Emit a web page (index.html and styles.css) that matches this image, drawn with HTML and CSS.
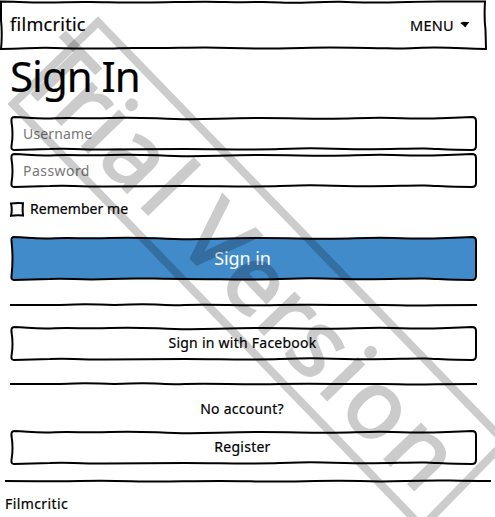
FILE: index.html
```html
<!DOCTYPE html>
<html lang="en">
<head>
<meta charset="utf-8">
<title>Filmcritic</title>
<link rel="stylesheet" href="styles.css">
</head>
<body>
<header class="navbar">
  <svg class="sketch" viewBox="0 0 487 50"><path d="M1 1.500C15 1.500 25 2.500 45 2.500S70 1.800 90 2S125 2.500 145 2.500S185 1.700 205 1.700S235 2.500 255 2S280 2.800 290 2.800S325 1.600 340 1.800S355 2.500 375 2.500S420 1.500 440 1.500S470 1.500 485 1.500Q484 18 485.500 30L486 49C465 49 460 47.500 435 47.500S410 48.800 395 48.500S350 47.500 330 47.500S290 48.500 260 48.500S230 47.500 205 47.500S170 48.500 145 48S120 48.500 110 48.500S75 48.700 55 48S30 48.500 1 49Q2.500 34 1 20Z"/></svg>
  <span class="brand">filmcritic</span>
  <span class="menu"><span class="menu-text">MENU</span><svg class="caret" viewBox="0 0 10 8"><path d="M.2 2L3 .8L9.500 1.200L7.300 3.500L5.200 6.500L3.500 4.500Z"/></svg></span>
</header>
<main class="content">
  <h1><span>Sign In</span></h1>
  <form>
    <div class="box field"><svg class="sketch" viewBox="0 0 467 35"><use href="#frame"/></svg><span class="placeholder username">Username</span></div>
    <div class="box field"><svg class="sketch" viewBox="0 0 467 35"><use href="#frame"/></svg><span class="placeholder password">Password</span></div>
    <div class="remember"><svg class="check" viewBox="0 0 14 15"><path d="M1 1.500Q7 .7 13 1.200Q12.300 7 13 13.500Q7 12.700 1 13.700Q2.500 8 1 1.500Z"/></svg><span>Remember me</span></div>
    <div class="box primary"><svg class="sketch" viewBox="0 0 467 45"><path d="M4 1C20 1.500 24 3 45 2.200S75 3 100 2S135 2 165 3S210 2 250 2S310 3.500 345 2.200S375 2 400 2.500S430 2 462 1Q466 1 466 5V40Q466 44 462 44C440 44 430 43 415 42.500S370 44 335 43S300 42 270 43S210 43 175 43S130 41.500 100 43S60 42 40 43L4 44Q1 44 1.500 40Q3.500 22 1.500 5Q1 1 4 1Z"/></svg><span>Sign in</span></div>
    <svg class="rule" viewBox="0 0 467 4"><use href="#line"/></svg>
    <div class="box facebook"><svg class="sketch" viewBox="0 0 467 35"><use href="#frame"/></svg><span>Sign in with Facebook</span></div>
    <svg class="rule second" viewBox="0 0 467 4"><use href="#line"/></svg>
    <p class="question"><span>No account?</span></p>
    <div class="box register"><svg class="sketch" viewBox="0 0 467 35"><use href="#frame"/></svg><span>Register</span></div>
  </form>
</main>
<footer>
  <svg class="footer-rule" viewBox="0 0 486 4"><path d="M0 2C35 2 45 2.600 75 2S115 2 140 2.500S180 2 215 2S260 3.500 310 2S350 3.500 400 2S430 2 486 2"/></svg>
  <span>Filmcritic</span>
</footer>
<svg class="defs" width="0" height="0"><defs>
  <path id="frame" d="M4 1C20 1.500 24 3 45 2.200S75 3 100 2S135 2 165 3S210 2 250 2S310 3.500 345 2.200S375 2 400 2.500S430 2 462 1Q466 1 466 5V30Q466 34 462 34C440 34 430 33 415 32.500S370 34 335 33S300 32 270 33S210 33 175 33S130 33.500 95 33.500S60 32 40 33L4 34Q1 34 1.500 30Q3.500 18 1.500 6Q1 1 4 1Z"/>
  <path id="line" d="M0 2C35 2 43 2.500 65 1.500S95 3 120 1.500S145 3 175 2S230 3 270 2S330 2.500 360 2S385 2.500 405 2.500S430 2 467 2"/>
</defs></svg>
<svg class="watermark" viewBox="0 0 495 517">
  <path opacity=".2" d="M98 22L505 442L422 527L13 104Z"/>
  <text opacity=".2" transform="translate(34 96) rotate(46)" x="-25 23 62 89 148 175 202 262 315 356 406 435 497" y="0">Trial Version</text>
</svg>
</body>
</html>
```
FILE: styles.css
```css
* { box-sizing: border-box; }
body {
  margin: 0;
  width: 495px;
  height: 517px;
  overflow: hidden;
  position: relative;
  background: #fff;
  color: #000;
  font: 14px/20px "Noto Sans", sans-serif;
  letter-spacing: .25px;
  -webkit-text-stroke: .2px;
}
svg { display: block; }
.sketch {
  position: absolute;
  inset: 0;
  width: 100%;
  height: 100%;
  overflow: visible;
}
path { fill: none; stroke: #000; stroke-width: 2; }
.navbar {
  position: relative;
  width: 487px;
  height: 50px;
  padding: 0 17px 0 10px;
  display: flex;
  align-items: center;
  justify-content: space-between;
}
.brand { font-size: 18px; letter-spacing: .3px; line-height: 24px; margin-top: -2px; }
.menu { display: flex; align-items: center; gap: 6px; margin-top: -1px; }
.menu-text { font-size: 14.5px; letter-spacing: .3px; }
.caret { width: 10px; height: 8px; }
.caret path { fill: #000; stroke: none; }
.content { width: 467px; margin-left: 10px; }
h1 {
  margin: 0;
  height: 66px;
  padding-top: 3px;
  font-size: 42px;
  font-weight: 400;
  letter-spacing: -1px;
  line-height: 46px;
}
.box {
  position: relative;
  height: 35px;
  display: flex;
  align-items: center;
  justify-content: center;
}
.box > span { position: relative; }
.field { justify-content: flex-start; padding-left: 13px; margin-bottom: 2px; }
.placeholder { color: #777; letter-spacing: .15px; -webkit-text-stroke: 0; }
.password { letter-spacing: .45px; }
.remember { display: flex; align-items: center; gap: 6px; height: 20px; margin-top: 11px; letter-spacing: .05px; }
.check { width: 14px; height: 15px; }
.primary { height: 45px; margin-top: 17px; color: #fff; font-size: 18px; letter-spacing: -.1px; -webkit-text-stroke: 0; }
.primary > span { margin: -2px 2px 0 0; }
.primary path { fill: #428bca; }
.rule { width: 467px; height: 4px; margin-top: 22px; }
.facebook { margin-top: 19px; }
.facebook > span, .register > span { margin: -2px 2px 0 0; }
.second { margin-top: 21px; }
.question { height: 20px; margin: 13px 0 11px; padding-right: 3px; text-align: center; }
footer { margin-left: 5px; letter-spacing: .4px; }
.footer-rule { width: 486px; height: 4px; margin: 14px 0 11px; }
.defs { position: absolute; }
.watermark {
  position: absolute;
  inset: 0;
  width: 495px;
  height: 517px;
  pointer-events: none;
}
.watermark path { stroke-width: 8; }
.watermark text { font-size: 94px; letter-spacing: 0; stroke: #000; stroke-width: 2.4; -webkit-text-stroke: 2.4px #000; }
```
